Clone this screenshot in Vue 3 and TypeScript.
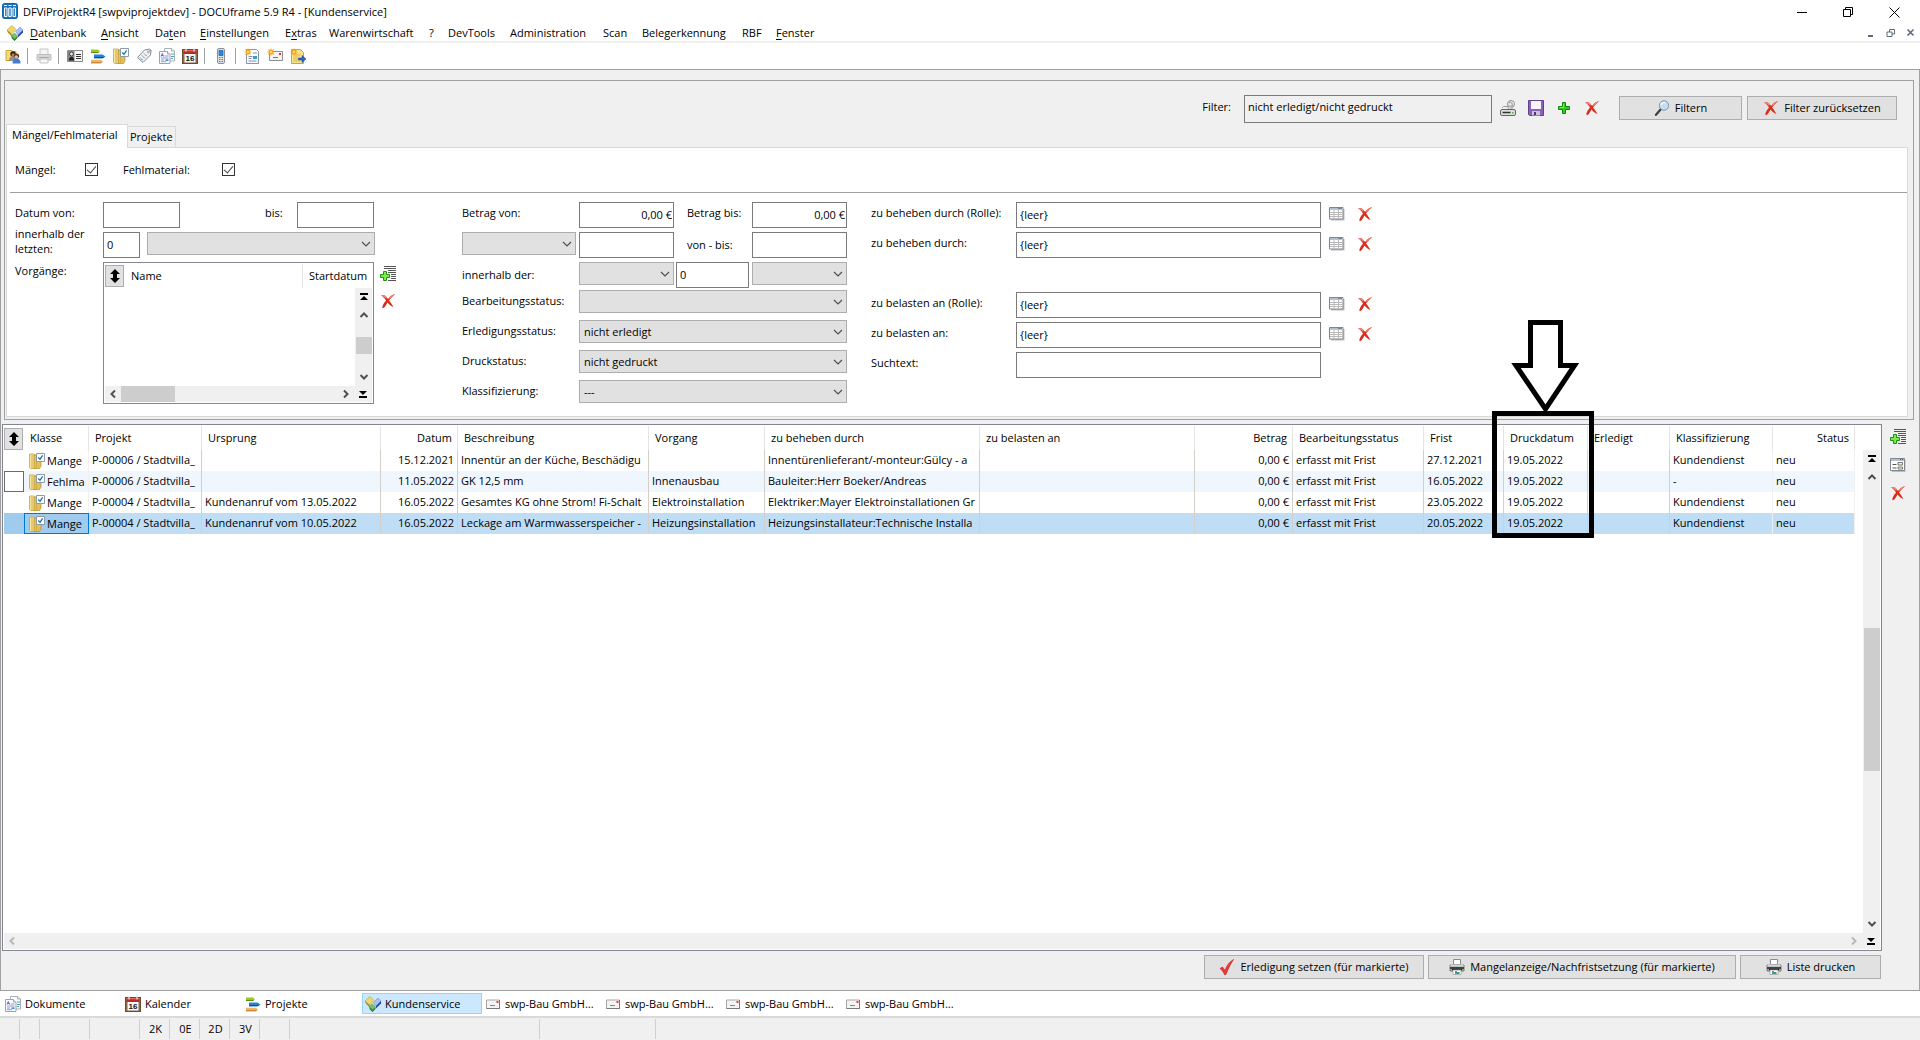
<script setup lang="ts">
import { ref } from 'vue'

interface MenuItem { pre: string; key: string; post: string }
interface Row {
  klasse: string; projekt: string; ursprung: string; datum: string; beschreibung: string
  vorgang: string; beheben: string; belasten: string; betrag: string; bearbeitung: string
  frist: string; druck: string; erledigt: string; klass: string; status: string
}
interface Task { icon: string; label: string; active?: boolean }

const menu: MenuItem[] = [
  { pre: '', key: 'D', post: 'atenbank' },
  { pre: '', key: 'A', post: 'nsicht' },
  { pre: 'Da', key: 't', post: 'en' },
  { pre: '', key: 'E', post: 'instellungen' },
  { pre: 'E', key: 'x', post: 'tras' },
  { pre: 'Warenwirtschaft', key: '', post: '' },
  { pre: '?', key: '', post: '' },
  { pre: 'DevTools', key: '', post: '' },
  { pre: 'Administration', key: '', post: '' },
  { pre: 'Scan', key: '', post: '' },
  { pre: 'Belegerkennung', key: '', post: '' },
  { pre: 'RBF', key: '', post: '' },
  { pre: '', key: 'F', post: 'enster' },
]

const toolGroups: { icon: string; title: string }[][] = [
  [{ icon: 'users', title: 'Adressen' }],
  [{ icon: 'printer-off', title: 'Drucken' }],
  [
    { icon: 'card', title: 'Kontakte' },
    { icon: 'bars', title: 'Projekte' },
    { icon: 'folder', title: 'Vorgänge' },
    { icon: 'tag', title: 'Artikel' },
    { icon: 'docs', title: 'Dokumente' },
    { icon: 'calendar', title: 'Kalender' },
  ],
  [{ icon: 'phone', title: 'Telefon' }],
  [
    { icon: 'newdoc', title: 'Neues Dokument' },
    { icon: 'newmail', title: 'Neue Nachricht' },
    { icon: 'newnote', title: 'Neue Notiz' },
  ],
]

const rows: Row[] = [
  { klasse: 'Mange', projekt: 'P-00006 / Stadtvilla_', ursprung: '', datum: '15.12.2021', beschreibung: 'Innentür an der Küche, Beschädigu', vorgang: '', beheben: 'Innentürenlieferant/-monteur:Gülcy - a', belasten: '', betrag: '0,00 €', bearbeitung: 'erfasst mit Frist', frist: '27.12.2021', druck: '19.05.2022', erledigt: '', klass: 'Kundendienst', status: 'neu' },
  { klasse: 'Fehlma', projekt: 'P-00006 / Stadtvilla_', ursprung: '', datum: '11.05.2022', beschreibung: 'GK 12,5 mm', vorgang: 'Innenausbau', beheben: 'Bauleiter:Herr Boeker/Andreas', belasten: '', betrag: '0,00 €', bearbeitung: 'erfasst mit Frist', frist: '16.05.2022', druck: '19.05.2022', erledigt: '', klass: '-', status: 'neu' },
  { klasse: 'Mange', projekt: 'P-00004 / Stadtvilla_', ursprung: 'Kundenanruf vom 13.05.2022', datum: '16.05.2022', beschreibung: 'Gesamtes KG ohne Strom! Fi-Schalt', vorgang: 'Elektroinstallation', beheben: 'Elektriker:Mayer Elektroinstallationen Gr', belasten: '', betrag: '0,00 €', bearbeitung: 'erfasst mit Frist', frist: '23.05.2022', druck: '19.05.2022', erledigt: '', klass: 'Kundendienst', status: 'neu' },
  { klasse: 'Mange', projekt: 'P-00004 / Stadtvilla_', ursprung: 'Kundenanruf vom 10.05.2022', datum: '16.05.2022', beschreibung: 'Leckage am Warmwasserspeicher -', vorgang: 'Heizungsinstallation', beheben: 'Heizungsinstallateur:Technische Installa', belasten: '', betrag: '0,00 €', bearbeitung: 'erfasst mit Frist', frist: '20.05.2022', druck: '19.05.2022', erledigt: '', klass: 'Kundendienst', status: 'neu' },
]

const selected = ref(3)

const tasks: Task[] = [
  { icon: 'docs', label: 'Dokumente' },
  { icon: 'calendar', label: 'Kalender' },
  { icon: 'bars', label: 'Projekte' },
  { icon: 'cubes', label: 'Kundenservice', active: true },
  { icon: 'mail', label: 'swp-Bau GmbH...' },
  { icon: 'mail', label: 'swp-Bau GmbH...' },
  { icon: 'mail', label: 'swp-Bau GmbH...' },
  { icon: 'mail', label: 'swp-Bau GmbH...' },
]

const statusCells = ['', '', '', '', '2K', '0E', '2D', '3V', '', '', '']

const maengel = ref(true)
const fehlmaterial = ref(true)
const erledigung = ref('nicht erledigt')
const druck = ref('nicht gedruckt')
const klassifizierung = ref('---')
const roleFields = [
  { id: 'beheben-rolle', label: 'zu beheben durch (Rolle):', cls: '' },
  { id: 'beheben', label: 'zu beheben durch:', cls: '' },
  { id: 'belasten-rolle', label: 'zu belasten an (Rolle):', cls: 'second' },
  { id: 'belasten', label: 'zu belasten an:', cls: '' },
]
</script>

<template>
  <div class="app">
    <svg class="defs" aria-hidden="true">
      <symbol id="logo" viewBox="0 0 16 16">
        <rect x="0.500" y="0.500" width="15" height="15" rx="2" fill="#1b75bc" stroke="#0f62a5" />
        <path d="M2.500 5v8.500h2.500V5zM6.750 5v8.500h2.500V5zM11 5v8.500h2.500V5z" fill="#2f86c8" stroke="#fff" />
        <path d="M2 2.500h3M6.500 2.500h3M11 2.500h3" stroke="#fff" />
      </symbol>
      <symbol id="cubes" viewBox="0 0 16 16">
        <path d="M0 5l5-4.500L9 4.500 4.500 9z" fill="#ecd96a" stroke="#b99a28" stroke-width=".6" />
        <path d="M0 5l4.500 4 .5 3L.5 7z" fill="#a88916" />
        <path d="M8.500 6.500l4.500-4.500L16 5l-5 5z" fill="#a9c0f5" stroke="#6880cf" stroke-width=".5" />
        <path d="M11 10L16 5v2.500l-5 5z" fill="#2b47ad" />
        <path d="M4.500 10.500L7.500 8l3 3-3 3z" fill="#7cc06d" stroke="#3c8233" stroke-width=".5" />
        <path d="M4.500 10.800l3 3.200 3-3v2l-3 3-3-3z" fill="#2f7d2a" />
      </symbol>
      <symbol id="users" viewBox="0 0 16 16">
        <path d="M1 2.500h6l1 1h3v9H1z" fill="#f3dc78" stroke="#c9a63a" />
        <circle cx="8" cy="6" r="2.700" fill="#2c1d12" /><circle cx="8.200" cy="7" r="1.800" fill="#b87c4a" />
        <path d="M4 13c0-4 2-4.500 4-4.500s4 1 4 4.500z" fill="#8f8f95" />
        <circle cx="11.500" cy="8" r="2.600" fill="#5a3317" /><circle cx="11.300" cy="9" r="1.800" fill="#efb78a" />
        <path d="M7.500 15.500c0-4 2-5 4-5s4 1 4 5z" fill="#3f7fdb" />
      </symbol>
      <symbol id="printer-off" viewBox="0 0 16 16">
        <path d="M4 1h8v6H4z" fill="#f4f4f4" stroke="#c5c5c5" /><path d="M1 6.500h14v5.500H1z" fill="#d5d5d5" stroke="#bdbdbd" />
        <path d="M3 9.500h10" stroke="#aaa" /><path d="M4 11h8v4H4z" fill="#f6f6f6" stroke="#c5c5c5" />
      </symbol>
      <symbol id="printer" viewBox="0 0 16 16">
        <path d="M4.500.500h7v5h-7z" fill="#fff" stroke="#8c8c8c" /><path d="M1 6h14v6H1z" fill="#a9abad" stroke="#77797b" />
        <path d="M2 5.500h12l1 2H1z" fill="#d5d6d7" /><path d="M1 8h14v2H1z" fill="#3f4143" /><path d="M3 10h10v1.500H3z" fill="#222" />
        <path d="M4 11h8v4.500H4z" fill="#fff" stroke="#9a9a9a" stroke-width=".7" /><path d="M6 12h2v3H6z" fill="#2a9fd0" /><path d="M8 13h2.500v2H8z" fill="#31a45c" /><path d="M13 10.500h1.500v1H13z" fill="#58c840" />
      </symbol>
      <symbol id="card" viewBox="0 0 16 16">
        <path d="M.500 2.500h15v11H.500z" fill="#f5f5f5" stroke="#8a8a8a" />
        <path d="M1 3h6.500v10H1z" fill="#8a8a8a" /><circle cx="4.500" cy="6" r="1.900" fill="#eee" stroke="#222" stroke-width=".8" />
        <path d="M1.800 12.500c0-5 5.400-5 5.400 0z" fill="#222" /><path d="M9 6.500h5M9 8.500h5M9 10.500h5" stroke="#333" />
      </symbol>
      <symbol id="bars" viewBox="0 0 16 16">
        <path d="M1 1.500h7L10 3.200 8 5H1z" fill="#9cc81e" /><path d="M1 4h8L8 5H1z" fill="#5e8909" />
        <path d="M4 6.500h8.500L15.500 8.500 12.500 10.300H4z" fill="#2383cf" /><path d="M4 9h10.800l-2.300 1.300H4z" fill="#0d5190" />
        <path d="M1 11.800h10l2 1.800-2 1.600H1z" fill="#edb661" /><path d="M1 14.200h11.300l-1.300 1H1z" fill="#c2752a" />
      </symbol>
      <symbol id="folder" viewBox="0 0 16 16">
        <path d="M.500 1h4.500l1.500 1v13.500h-5l-1-1z" fill="#f7e5a0" stroke="#c4a343" stroke-width=".8" />
        <path d="M5 2h7v11l-1.500 2.500H5z" fill="#e3c156" stroke="#b48e2a" stroke-width=".7" /><path d="M3 2v13M7.500 8v7" stroke="#d0ad48" />
        <path d="M7.500.500h8v8h-8z" fill="#fbfdff" stroke="#8d9aa9" /><path d="M9.300 4.500l1.700 1.800 2.600-4" fill="none" stroke="#1a6a9c" stroke-width="1.200" />
      </symbol>
      <symbol id="tag" viewBox="0 0 16 16">
        <path d="M1.500 9.500L8.500 2l5-1 1.500 1.500-.500 4.500-7.500 7.500z" fill="#f1f4f6" stroke="#7e8c98" />
        <path d="M12.500 3.500c3-3 3.500-1 1 .500" fill="none" stroke="#999" /><circle cx="12.200" cy="4" r="1" fill="#fff" stroke="#777" stroke-width=".6" />
        <path d="M4 9.500l3 3M6 7.500l3 3M8 5.500l3 3" stroke="#55606b" stroke-dasharray="1.500 .8" />
      </symbol>
      <symbol id="docs" viewBox="0 0 16 16">
        <path d="M5.500.500h7l3 2.500v10h-10z" fill="#fcfdff" stroke="#aab0b8" /><path d="M12.500.500V3h3" fill="#e6e8ee" stroke="#aab0b8" />
        <path d="M12 6h3M12 8.500h3M12 10.500h2" stroke="#3fa7b4" /><path d="M.500 3.500h8l2.500 2.500v9.500H.500z" fill="#f9faff" stroke="#9da4ad" />
        <path d="M8.500 3.500V6H11" fill="#fff" stroke="#9da4ad" /><path d="M2 8.500l1.300-3 1.200 3M2.400 7.500h1.800" fill="none" stroke="#585bd0" stroke-width=".9" />
        <path d="M5.500 8h4M2 10h7.500M2 12h3M2 13.700h5" stroke="#7a89b5" stroke-width=".8" /><path d="M6.500 11.300h3v1.700h-3z" fill="#3f91de" />
      </symbol>
      <symbol id="calendar" viewBox="0 0 16 16">
        <rect x=".5" y="1.500" width="15" height="14" fill="#8d6a4a" stroke="#6d4b31" /><path d="M1.500 2h13v4h-13z" fill="#bb2a24" /><path d="M1.500 2h13v1.300h-13z" fill="#df6b60" />
        <path d="M2.500 6h11v8.500h-11z" fill="#f5f7f8" /><path d="M4 .5v3M12 .5v3" stroke="#ddd" stroke-width="1.300" />
        <text x="8" y="13" text-anchor="middle" font-family="Liberation Sans, sans-serif" font-size="8" font-weight="700" fill="#111">16</text>
      </symbol>
      <symbol id="phone" viewBox="0 0 16 16">
        <rect x="4.500" y=".5" width="7" height="15" rx="1.500" fill="#dfe3e8" stroke="#8b9096" /><path d="M6 2.500h4v5H6z" fill="#2b8ae2" stroke="#125ea8" stroke-width=".7" />
        <path d="M6 9.500h1M7.500 9.500h1M9 9.500h1M6 11.500h1M7.500 11.500h1M9 11.500h1M6 13.500h1M7.500 13.500h1M9 13.500h1" stroke="#777" />
      </symbol>
      <symbol id="spark" viewBox="0 0 16 16">
        <path d="M4 0l.8 2L7 1 6 3.200 8 4 6 4.800 7 7 4.800 6 4 8l-.8-2L1 7l1-2.200L0 4l2-.8L1 1l2.200 1z" fill="#f6a21c" /><circle cx="4" cy="4" r="1.300" fill="#ffd867" />
      </symbol>
      <symbol id="newdoc" viewBox="0 0 16 16">
        <path d="M2.500 1.500h10l2 2v12h-12z" fill="#fbfcff" stroke="#8c95a0" /><path d="M9 5h4M4.500 8.500h4M4.500 10.500h3M4.500 13h8" stroke="#7a8cc0" /><path d="M9 8h4v3H9z" fill="#35a0c8" />
        <use href="#spark" width="16" height="16" />
      </symbol>
      <symbol id="newmail" viewBox="0 0 16 16">
        <path d="M2.500 3.500h13v9h-13z" fill="#f3f3f3" stroke="#8d8d8d" /><path d="M12 5h2v2h-2z" fill="#d93030" /><path d="M6 9.500h5" stroke="#777" /><use href="#spark" width="16" height="16" />
      </symbol>
      <symbol id="newnote" viewBox="0 0 16 16">
        <path d="M1.500 1.500h9l3 3v11h-12z" fill="#f8e38c" stroke="#c9a636" /><path d="M3.500 7h7M3.500 9h5M3.500 11h5M3.500 13h7" stroke="#d5b550" />
        <path d="M8.500 10h3.500V7.500l4 3.500-4 3.500V12H8.500z" fill="#2d66c8" stroke="#173f91" stroke-width=".5" /><use href="#spark" width="16" height="16" />
      </symbol>
      <symbol id="mail" viewBox="0 0 16 16">
        <path d="M1.500 4h13v8.500h-13z" fill="#f4f4f4" stroke="#a5a5a5" /><path d="M14.500 4v8.500h-13" fill="none" stroke="#7a7a7a" /><path d="M11.500 5h2v2h-2z" fill="#f03b3b" /><path d="M5 9.500h5" stroke="#888" />
      </symbol>
      <symbol id="cross" viewBox="0 0 16 16">
        <path d="M1 2.500C4 1 5.500 2.500 8 6c2-2.500 4-4.500 7.200-4.700C12.500 3.500 10.500 5.500 9 7.500c1.700 2 3.500 4.500 4.500 6.500-2.500-1-4.300-2.500-6-4.500C6 12 5.500 14 3 15.300 1.300 14.500 3.500 10.500 6 7.500 4.500 5 3 3.500 1 2.500z" fill="#da2c1a" />
        <path d="M1 2.500c3-1.500 4.500 0 6 2l-1 1.200C4.500 4 3 3 1 2.500zM15.200 1.300C12.500 1.700 10.500 3.500 9 5l.600.900c1.500-1.700 3.500-3.200 5.600-4.600z" fill="#f08a7a" />
      </symbol>
      <symbol id="table" viewBox="0 0 16 16">
        <path d="M2 3h13.500v11.500H2z" fill="#b9bcc0" /><path d="M.500 1.500h13.500v11.500H.500z" fill="#fff" stroke="#7e8790" /><path d="M1 2h12.500v2H1z" fill="#b4c1ce" /><path d="M9.500 2.500h1M11.500 2.500h1" stroke="#44505c" />
        <path d="M1 6.500h12.500M1 8.500h12.500M1 10.500h12.500M5 4v9M9.500 4v9" stroke="#b9b9b9" />
      </symbol>
      <symbol id="form" viewBox="0 0 16 16">
        <path d="M2 3h13.500v12H2z" fill="#b9bcc0" /><path d="M.500 1.500h14v12H.500z" fill="#fff" stroke="#7e8790" /><path d="M1 2h13v2H1z" fill="#b4c1ce" /><path d="M10 2.500h1M12 2.500h1" stroke="#44505c" />
        <path d="M2.500 7.500h4M2.500 11h4" stroke="#555" /><path d="M8 5.500h4.500V8H8z" fill="#fff5b0" stroke="#555" stroke-width=".8" /><path d="M8 10h4.500v2H8z" fill="#fff" stroke="#555" stroke-width=".8" />
      </symbol>
      <symbol id="addlist" viewBox="0 0 16 16">
        <path d="M4 .5h12M4 2.500h12M8 4.500h8M8 6.500h8M11 8.500h5M11 10.500h5M11 12.500h5M8 14.500h8" stroke="#555" />
        <path d="M3.500 5.500h3v3h3v3h-3v3h-3v-3h-3v-3h3z" fill="#7ee84e" stroke="#1b9310" />
      </symbol>
      <symbol id="add" viewBox="0 0 16 16"><path d="M6.500 2.500h3v4h4v3h-4v4h-3v-4h-4v-3h4z" fill="#39c51d" stroke="#0e8a09" /><path d="M7.500 3.500v4h-4" fill="none" stroke="#8aec6c" /></symbol>
      <symbol id="loadfilter" viewBox="0 0 16 16">
        <circle cx="11" cy="4" r="3.500" fill="#ececec" stroke="#8d8d8d" /><path d="M9 3c2-2 4 1 3 3" fill="none" stroke="#6a9a63" /><path d="M8 6h4v4H8z" fill="#d0d0d0" stroke="#888" stroke-width=".6" />
        <path d="M2 8l1.500-1.500H8" fill="none" stroke="#999" /><rect x=".5" y="9.500" width="15" height="6" rx="1.500" fill="#ddd" stroke="#666" /><path d="M2.500 12.500h8" stroke="#333" stroke-width="1.500" /><path d="M12 12h1.500v1.500H12z" fill="#46b72f" />
      </symbol>
      <symbol id="save" viewBox="0 0 16 16">
        <path d="M.500.500h15v15h-14l-1-1z" fill="#8b62b8" stroke="#61408c" /><path d="M3 1h10v8H3z" fill="#f6f5fc" /><path d="M4 11h8v4.500H4z" fill="#c9c3d6" /><path d="M6 12h2v3H6z" fill="#4e3577" />
      </symbol>
      <symbol id="lens" viewBox="0 0 16 16">
        <path d="M7 9L2 14.800" stroke="#3c3f45" stroke-width="2.200" stroke-linecap="round" /><circle cx="10" cy="5.500" r="4.700" fill="#c4dff3" stroke="#7d93a8" /><path d="M7 5c.5-2 2-3 4-2.500" fill="none" stroke="#fff" stroke-width="1.400" />
      </symbol>
      <symbol id="check" viewBox="0 0 16 16"><path d="M1 9.500l2.500-1.500L6 11.500C7.500 7 10 3 14.500.500 11.500 5 9 10 7 15.500H5.500C4.500 13 3 11 1 9.500z" fill="#f0383c" stroke="#c4161b" stroke-width=".6" /></symbol>
      <symbol id="chev" viewBox="0 0 10 10"><path d="M1 3l4 4 4-4" fill="none" stroke="#505050" stroke-width="1.200" /></symbol>
      <symbol id="arrow" viewBox="0 0 10 10"><path d="M1.500 7L5 3.500 8.500 7" fill="none" stroke="currentColor" stroke-width="2" /></symbol>
      <symbol id="toend" viewBox="0 0 10 10"><path d="M1 1h8v2H1zM5 4l4 4H1z" fill="#000" /></symbol>
      <symbol id="updown" viewBox="0 0 10 14"><path d="M5 0l5 5H7v4h3l-5 5-5-5h3V5H0z" fill="#000" /></symbol>
    </svg>

    <header class="titlebar">
      <svg class="ico"><use href="#logo" /></svg>
      <h1>DFViProjektR4 [swpviprojektdev] - DOCUframe 5.9 R4 - [Kundenservice]</h1>
      <div class="winbtns">
        <button aria-label="Minimieren"><svg viewBox="0 0 11 11"><path d="M0 5.500h10" stroke="#000" /></svg></button>
        <button aria-label="Wiederherstellen"><svg viewBox="0 0 11 11"><path d="M.500 2.500h7v7h-7zM2.500 2.500v-2h7v7h-2" fill="none" stroke="#000" /></svg></button>
        <button aria-label="Schließen"><svg viewBox="0 0 11 11"><path d="M.500.500l10 10M10.500.500l-10 10" stroke="#000" /></svg></button>
      </div>
    </header>

    <nav class="menubar">
      <svg class="ico"><use href="#cubes" /></svg>
      <div class="menu">
        <a v-for="m in menu" :key="m.pre + m.key" href="#">{{ m.pre }}<u v-if="m.key">{{ m.key }}</u>{{ m.post }}</a>
      </div>
      <div class="mdibtns">
        <button aria-label="Fenster minimieren"><svg viewBox="0 0 10 10"><path d="M2 8h5" stroke="#5b6b80" stroke-width="2" /></svg></button>
        <button aria-label="Fenster wiederherstellen"><svg viewBox="0 0 10 10"><path d="M1 4h5v4.500H1zM3.500 4V1.500h5V6H6" fill="none" stroke="#5b6b80" /></svg></button>
        <button aria-label="Fenster schließen"><svg viewBox="0 0 10 10"><path d="M1.500 1.500l6 6M7.500 1.500l-6 6" stroke="#5b6b80" stroke-width="1.600" /></svg></button>
      </div>
    </nav>

    <div class="toolbar">
      <div v-for="(g, i) in toolGroups" :key="i" class="toolgroup">
        <button v-for="t in g" :key="t.icon" :aria-label="t.title"><svg class="ico"><use :href="'#' + t.icon" /></svg></button>
      </div>
    </div>

    <main class="client">
      <section class="panel">
        <div class="filterbar">
          <label for="filter">Filter:</label>
          <input id="filter" class="field filterbox" value="nicht erledigt/nicht gedruckt">
          <div class="filtericons">
            <button aria-label="Filter laden"><svg class="ico"><use href="#loadfilter" /></svg></button>
            <button aria-label="Filter speichern"><svg class="ico"><use href="#save" /></svg></button>
            <button aria-label="Filter hinzufügen"><svg class="ico"><use href="#add" /></svg></button>
            <button aria-label="Filter löschen"><svg class="ico"><use href="#cross" /></svg></button>
          </div>
          <button class="btn run"><svg class="ico"><use href="#lens" /></svg>Filtern</button>
          <button class="btn reset"><svg class="ico"><use href="#cross" /></svg>Filter zurücksetzen</button>
        </div>
        <div class="tabs">
          <button class="tab on">Mängel/Fehlmaterial</button>
          <button class="tab">Projekte</button>
        </div>
        <div class="page">
          <div class="checks">
            <label for="cb-m">Mängel:</label>
            <input id="cb-m" v-model="maengel" type="checkbox">
            <label for="cb-f" class="fehl">Fehlmaterial:</label>
            <input id="cb-f" v-model="fehlmaterial" type="checkbox">
          </div>
          <div class="form">
            <div class="dates">
              <div class="datelabels">
                <label for="von">Datum von:</label>
                <label for="letzten" class="two">innerhalb der letzten:</label>
                <span>Vorgänge:</span>
              </div>
              <div class="datefields">
                <div class="line">
                  <input id="von" class="field day">
                  <label for="bis">bis:</label>
                  <input id="bis" class="field day">
                </div>
                <div class="line">
                  <input id="letzten" class="field num" value="0">
                  <span class="combo span"><select aria-label="Zeitraum"><option></option></select><svg><use href="#chev" /></svg></span>
                </div>
                <div class="listline">
                  <div class="list">
                    <div class="listhead">
                      <button class="grip" aria-label="Sortieren"><svg><use href="#updown" /></svg></button>
                      <span class="name">Name</span>
                      <span class="start">Startdatum</span>
                    </div>
                    <div class="listbody">
                      <div class="vbar">
                        <svg class="end"><use href="#toend" /></svg>
                        <svg><use href="#arrow" /></svg>
                        <i class="vthumb small"></i>
                        <svg class="down"><use href="#arrow" /></svg>
                      </div>
                    </div>
                    <div class="hbar">
                      <svg class="left"><use href="#arrow" /></svg>
                      <i class="hthumb"></i>
                      <svg class="right"><use href="#arrow" /></svg>
                      <svg class="end down"><use href="#toend" /></svg>
                    </div>
                  </div>
                  <div class="listicons">
                    <button aria-label="Vorgang hinzufügen"><svg class="ico"><use href="#addlist" /></svg></button>
                    <button aria-label="Vorgang entfernen"><svg class="ico"><use href="#cross" /></svg></button>
                  </div>
                </div>
              </div>
            </div>

            <div class="amounts">
              <label for="bvon">Betrag von:</label>
              <input id="bvon" class="field right" value="0,00 €">
              <label for="bbis" class="mid">Betrag bis:</label>
              <input id="bbis" class="field right" value="0,00 €">

              <span class="combo kind"><select aria-label="Datumsart"><option></option></select><svg><use href="#chev" /></svg></span>
              <input id="dvon" class="field" aria-label="von">
              <label for="dbis" class="mid low">von - bis:</label>
              <input id="dbis" class="field">

              <label for="inn" class="low">innerhalb der:</label>
              <span class="combo"><select aria-label="Richtung"><option></option></select><svg><use href="#chev" /></svg></span>
              <input id="inn" class="field count" value="0">
              <span class="combo"><select aria-label="Einheit"><option></option></select><svg><use href="#chev" /></svg></span>

              <label for="bst">Bearbeitungsstatus:</label>
              <span class="combo wide"><select id="bst"><option></option></select><svg><use href="#chev" /></svg></span>
              <label for="est">Erledigungsstatus:</label>
              <span class="combo wide"><select id="est" v-model="erledigung"><option>nicht erledigt</option></select><svg><use href="#chev" /></svg></span>
              <label for="dst">Druckstatus:</label>
              <span class="combo wide"><select id="dst" v-model="druck"><option>nicht gedruckt</option></select><svg><use href="#chev" /></svg></span>
              <label for="kst">Klassifizierung:</label>
              <span class="combo wide"><select id="kst" v-model="klassifizierung"><option>---</option></select><svg><use href="#chev" /></svg></span>
            </div>

            <div class="roles">
              <div v-for="r in roleFields" :key="r.id" class="role" :class="r.cls">
                <label :for="r.id">{{ r.label }}</label>
                <input :id="r.id" class="field" value="{leer}">
                <button aria-label="Auswählen"><svg class="ico"><use href="#table" /></svg></button>
                <button aria-label="Leeren"><svg class="ico"><use href="#cross" /></svg></button>
              </div>
              <div class="role">
                <label for="such">Suchtext:</label>
                <input id="such" class="field">
              </div>
            </div>
          </div>
        </div>
      </section>

      <section class="results">
        <div class="grid">
          <div class="gridbody">
            <table>
              <colgroup>
                <col class="c0"><col class="c1"><col class="c2"><col class="c3"><col class="c4"><col class="c5"><col class="c6"><col class="c7">
                <col class="c8"><col class="c9"><col class="c10"><col class="c11"><col class="c12"><col class="c13"><col class="c14"><col class="c15">
              </colgroup>
              <thead>
                <tr>
                  <th class="sel"><button class="grip" aria-label="Sortieren"><svg><use href="#updown" /></svg></button></th>
                  <th class="first">Klasse</th>
                  <th>Projekt</th>
                  <th>Ursprung</th>
                  <th class="r">Datum</th>
                  <th>Beschreibung</th>
                  <th>Vorgang</th>
                  <th>zu beheben durch</th>
                  <th>zu belasten an</th>
                  <th class="r">Betrag</th>
                  <th>Bearbeitungsstatus</th>
                  <th>Frist</th>
                  <th class="marked">Druckdatum
                    <svg class="mark" viewBox="0 0 104 220" aria-hidden="true">
                      <rect x="3.500" y="94.500" width="97" height="122" fill="none" stroke="#000" stroke-width="5" />
                      <path d="M39.500 3.500h30v43h14L54.500 90 25 46.500h14.500z" fill="#fff" stroke="#000" stroke-width="5" />
                    </svg>
                  </th>
                  <th>Erledigt</th>
                  <th>Klassifizierung</th>
                  <th class="r">Status</th>
                </tr>
              </thead>
              <tbody>
                <tr v-for="(r, i) in rows" :key="i" :class="{ alt: i === 1, active: i === selected }" @click="selected = i">
                  <td class="sel" :class="{ box: i === 1 }"></td>
                  <td class="klasse"><svg class="ico"><use href="#folder" /></svg>{{ r.klasse }}</td>
                  <td>{{ r.projekt }}</td>
                  <td>{{ r.ursprung }}</td>
                  <td class="r">{{ r.datum }}</td>
                  <td>{{ r.beschreibung }}</td>
                  <td>{{ r.vorgang }}</td>
                  <td>{{ r.beheben }}</td>
                  <td>{{ r.belasten }}</td>
                  <td class="r">{{ r.betrag }}</td>
                  <td>{{ r.bearbeitung }}</td>
                  <td>{{ r.frist }}</td>
                  <td>{{ r.druck }}</td>
                  <td>{{ r.erledigt }}</td>
                  <td>{{ r.klass }}</td>
                  <td>{{ r.status }}</td>
                </tr>
              </tbody>
            </table>
            <div class="vbar">
              <svg class="end"><use href="#toend" /></svg>
              <svg><use href="#arrow" /></svg>
              <i class="vthumb"></i>
              <svg class="down"><use href="#arrow" /></svg>
            </div>
          </div>
          <div class="hbar off">
            <svg class="left"><use href="#arrow" /></svg>
            <svg class="right"><use href="#arrow" /></svg>
            <svg class="end down"><use href="#toend" /></svg>
          </div>
        </div>
        <div class="sideicons">
          <button aria-label="Hinzufügen"><svg class="ico"><use href="#addlist" /></svg></button>
          <button aria-label="Bearbeiten"><svg class="ico"><use href="#form" /></svg></button>
          <button aria-label="Löschen"><svg class="ico"><use href="#cross" /></svg></button>
        </div>
      </section>

      <div class="actions">
        <button class="btn done"><svg class="ico"><use href="#check" /></svg>Erledigung setzen (für markierte)</button>
        <button class="btn notice"><svg class="ico"><use href="#printer" /></svg>Mangelanzeige/Nachfristsetzung (für markierte)</button>
        <button class="btn print"><svg class="ico"><use href="#printer" /></svg>Liste drucken</button>
      </div>
    </main>

    <nav class="taskbar">
      <button v-for="(t, i) in tasks" :key="i" :class="{ active: t.active }"><svg class="ico"><use :href="'#' + t.icon" /></svg>{{ t.label }}</button>
    </nav>
    <footer class="status">
      <span v-for="(s, i) in statusCells" :key="i">{{ s }}</span>
    </footer>
  </div>
</template>

<style>
body { margin: 0; background: #fff; }
</style>

<style scoped>
* { box-sizing: border-box; }
.app {
  display: flex; flex-direction: column; min-height: 100vh; background: #fff; color: #000;
  font-family: "Open Sans", "Noto Sans", sans-serif; font-size: 11px; line-height: 16px;
}
button, input, select { font: inherit; color: inherit; margin: 0; }
button { padding: 0; border: 0; background: none; display: flex; align-items: center; white-space: nowrap; }
.defs { display: none; }
.ico { width: 16px; height: 16px; flex: none; display: block; }

.titlebar { display: flex; align-items: center; height: 24px; padding: 0 3px 0 2px; }
.titlebar .ico { margin-bottom: 3px; }
.titlebar h1 { margin: 0 0 0 5px; font-size: 11px; font-weight: 400; flex: 1; }
.winbtns { display: flex; }
.winbtns button { width: 46px; height: 20px; justify-content: center; }
.winbtns svg { width: 11px; height: 11px; }
.menubar { display: flex; align-items: center; height: 19px; padding-left: 7px; border-bottom: 2px solid #f0f0f0; }
.menu { display: grid; grid-template-columns: 71px 54px 45px 85px 44px 100px 19px 62px 93px 39px 100px 34px auto; margin-left: 7px; flex: 1; justify-content: start; }
.menu a { color: #000; text-decoration: none; white-space: nowrap; }
.menu u { text-underline-offset: 2px; }
.mdibtns { display: flex; gap: 10px; padding-right: 4px; }
.mdibtns svg { width: 10px; height: 10px; }
.toolbar { display: flex; align-items: center; height: 26px; padding-left: 5px; }
.toolgroup { display: flex; gap: 7px; }
.toolgroup + .toolgroup { margin-left: 6px; padding-left: 8px; border-left: 1px solid #a0a0a0; }

.client {
  flex: 1; display: flex; flex-direction: column; background: #f0f0f0;
  border: 1px solid #a0a0a0; padding: 10px 0 11px 1px;
}
.panel { margin: 0 5px 4px 2px; border: 1px solid #a0a0a0; padding: 0 5px 2px 1px; }
.filterbar { display: flex; justify-content: flex-end; align-items: flex-start; height: 43px; padding: 14px 11px 0 0; }
.filterbar label { line-height: 24px; margin-right: 13px; }
.filterbar .filterbox { width: 248px; height: 28px; background: #f0f0f0; padding-bottom: 5px; }
.filtericons { display: flex; gap: 12px; margin: 5px 19px 0 8px; }
.btn { justify-content: center; gap: 5px; height: 24px; margin-top: 1px; border: 1px solid #adadad; background: #e1e1e1; }
.run { width: 123px; }
.reset { width: 150px; margin-left: 5px; }
.tabs { display: flex; align-items: flex-end; height: 23px; }
.tab { height: 21px; padding: 0 2px; border: 1px solid #d9d9d9; border-left: 0; border-bottom: 0; }
.tab.on { width: 122px; height: 24px; padding: 0 0 3px 5px; margin-bottom: -1px; background: #fff; border-left: 1px solid #d9d9d9; position: relative; }
.page { background: #fff; border: 1px solid #d9d9d9; padding: 0 0 12px 3px; }
.checks { display: flex; align-items: center; height: 45px; padding: 0 0 1px 5px; border-bottom: 1px solid #a0a0a0; }
.checks label { width: 70px; }
.checks .fehl { width: 99px; margin-left: 25px; }
.checks input {
  appearance: none; width: 13px; height: 13px; border: 1px solid #333; background: #fff; display: grid; place-items: center;
}
.checks input:checked::after { content: ""; width: 4px; height: 8px; margin-bottom: 2px; border: solid #444; border-width: 0 1px 1px 0; rotate: 40deg; }

.form { display: flex; padding: 9px 0 0 5px; line-height: 22px; }
.field { border: 1px solid #7a7a7a; background: #fff; height: 26px; padding: 0 3px 2px; border-radius: 0; min-width: 0; }
.field.right { text-align: right; padding-right: 1px; }
.combo { display: grid; align-items: center; height: 23px; }
.combo select { grid-area: 1 / 1; appearance: none; width: 100%; height: 23px; border: 1px solid #adadad; background: #e1e1e1; padding: 0 4px; border-radius: 0; }
.combo svg { grid-area: 1 / 1; justify-self: end; width: 10px; height: 10px; margin-right: 4px; pointer-events: none; }

.dates { display: flex; width: 447px; }
.datelabels { display: grid; grid-template-rows: 24px 36px auto; width: 88px; align-content: start; }
.datelabels .two { width: 76px; line-height: 15px; }
.datelabels span { line-height: 18px; }
.line { display: flex; height: 30px; }
.day { width: 77px; }
.line label { width: 32px; margin-left: 85px; }
.num { width: 37px; margin-right: 7px; }
.span { width: 228px; }
.listline { display: flex; gap: 6px; }
.list { width: 271px; height: 142px; border: 1px solid #828790; padding: 1px; display: flex; flex-direction: column; }
.listhead { display: flex; height: 24px; line-height: 24px; }
.grip { width: 19px; height: 22px; justify-content: center; border: 1px solid #adadad; background: #e1e1e1; margin-top: 1px; }
.grip svg { width: 10px; height: 14px; }
.name { flex: 1; padding-left: 7px; border-right: 1px solid #e5e5e5; }
.start { width: 69px; padding-left: 6px; }
.listbody { flex: 1; display: flex; justify-content: flex-end; }
.vbar { width: 17px; background: #f0f0f0; display: flex; flex-direction: column; align-items: center; color: #505050; }
.vbar svg, .hbar svg { width: 10px; height: 10px; flex: none; margin: 4px 3px; }
.vbar .down, .hbar .down { rotate: 180deg; margin-top: auto; }
.vbar .vthumb { width: 16px; height: 143px; margin-top: 142px; background: #cdcdcd; }
.vbar .vthumb.small { height: 17px; margin-top: 13px; }
.hbar { display: flex; height: 16px; align-items: center; background: #f0f0f0; color: #505050; }
.hbar .left { rotate: 270deg; }
.hbar .right { rotate: 90deg; margin-left: auto; }
.hbar .end.down { margin: 3px 4px; }
.hthumb { width: 54px; height: 16px; background: #cdcdcd; }
.hbar.off { color: #b8b8b8; }
.listicons { display: flex; flex-direction: column; gap: 11px; padding-top: 4px; }

.amounts { display: grid; grid-template-columns: 117px 95px 78px 95px; grid-template-rows: 30px 30px 28px 30px 30px 30px; align-items: start; width: 409px; }
.amounts .mid { padding-left: 13px; }
.amounts .low { line-height: 26px; }
.kind { width: 114px; }
.count { width: 73px; margin-left: 2px; }
.wide { grid-column: 2 / 5; }

.role { display: flex; height: 30px; }
.role.second { margin-top: 30px; }
.role label { width: 145px; }
.role .field { width: 305px; }
.role button { height: 24px; margin-left: 8px; }
.role button + button { margin-left: 12px; }

.results { flex: 1; display: flex; }
.grid { flex: 1; min-width: 0; display: flex; flex-direction: column; border: 1px solid #828790; background: #fff; padding: 1px; }
.gridbody { flex: 1; display: flex; justify-content: space-between; }
.gridbody > .vbar { margin-top: 24px; }
table { border-collapse: separate; border-spacing: 0; table-layout: fixed; width: 1851px; align-self: flex-start; flex: none; }
.c0 { width: 20px; } .c1 { width: 65px; } .c2 { width: 113px; } .c3 { width: 179px; } .c4 { width: 77px; } .c5 { width: 191px; }
.c6 { width: 116px; } .c7 { width: 215px; } .c8 { width: 215px; } .c9 { width: 98px; } .c10 { width: 131px; } .c11 { width: 80px; }
.c12 { width: 84px; } .c13 { width: 82px; } .c14 { width: 103px; } .c15 { width: 82px; }
th { height: 24px; padding: 0 5px 0 6px; font-weight: 400; text-align: left; white-space: nowrap; border-right: 1px solid #e5e5e5; }
th.sel { padding: 0; border: 0; }
td { height: 21px; padding: 0 3px 2px; white-space: nowrap; overflow: hidden; border-right: 1px solid #d4cfc8; }
th.r, td.r { text-align: right; }
td:last-child, td:nth-child(15) { border-right-color: #f0f0f0; }
td.sel { padding: 0; border-right: 0; }
td.sel.box { border: 1px solid #6a6a6a; background: #fff; }
td.klasse { padding: 0 3px 0 5px; line-height: 18px; border-right-color: #f0f0f0; }
.klasse .ico { display: inline-block; margin-right: 2px; vertical-align: -4px; }
.alt td { background: #eff6fd; }
.alt td.sel { background: #fff; }
.active td { background: #bfddf5; }
.active td.sel { background: #9fcbef; }
.active td.klasse { background: #9fcbef; outline: 1px solid #0078d7; outline-offset: -1px; }
.marked { position: relative; }
.mark { position: absolute; left: -13px; top: -107px; width: 104px; height: 220px; z-index: 2; pointer-events: none; }
.mark path { fill: none; }
.sideicons { width: 37px; padding: 5px 0 0 8px; display: flex; flex-direction: column; gap: 12px; }

.actions { display: flex; justify-content: flex-end; gap: 4px; padding: 3px 38px 0 0; }
.done { width: 220px; }
.notice { width: 308px; }
.print { width: 141px; }

.taskbar { display: flex; height: 27px; padding: 2px 0 2px 2px; border-bottom: 2px solid #d9d9d9; }
.taskbar button { width: 120px; height: 21px; padding-left: 2px; gap: 4px; border: 1px solid transparent; }
.taskbar .active { background: #cce8ff; border-color: #99d1ff; }
.status { display: grid; grid-template-columns: 20px 20px 50px 50px 30px 30px 30px 30px 30px 250px 116px; height: 22px; padding-top: 1px; background: #f0f0f0; }
.status span { height: 20px; line-height: 20px; padding-left: 2px; text-align: center; border-right: 1px solid #d0d0d0; }
</style>
